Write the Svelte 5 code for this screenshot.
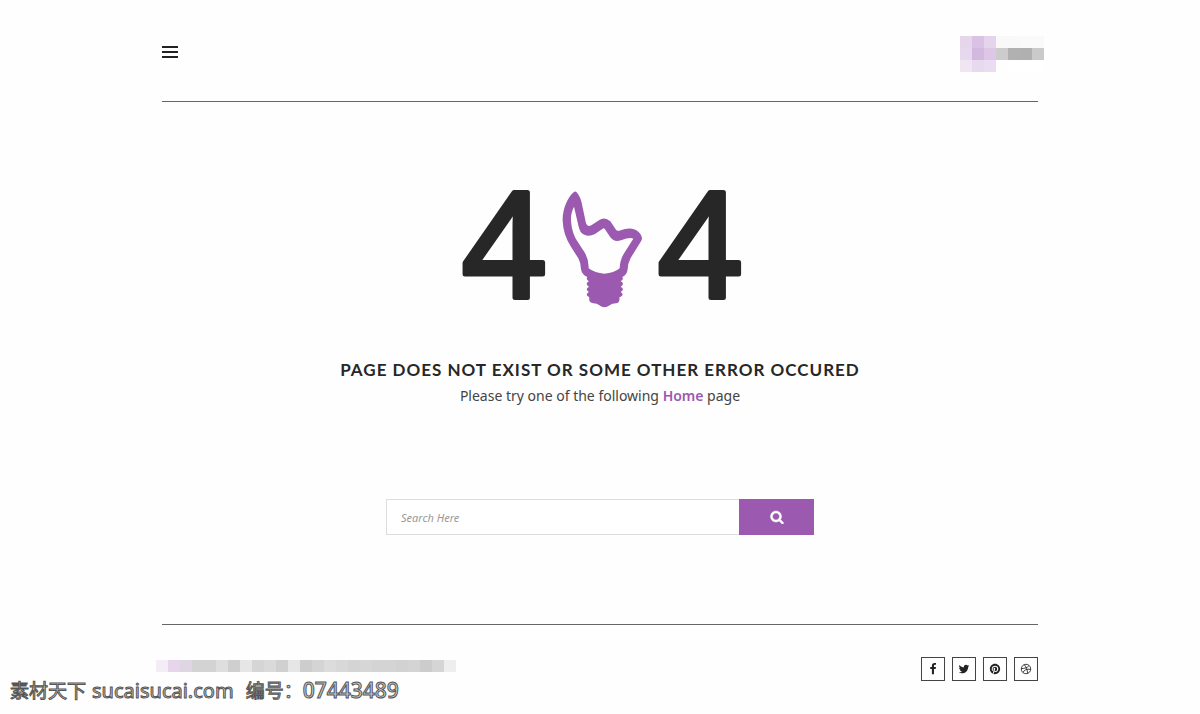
<script>
	let query = '';

	const logoRows = [
		['#e5d6ea', '#dac2e4', '#e5d5ec', '#f9f9f9', '#f9f9f9', '#fafafa', '#fafafa'],
		['#e6d8ed', '#d3b8e0', '#dec7e6', '#cccccc', '#b1b1b1', '#b0b0b0', '#cacaca'],
		['#efe5f3', '#e7daef', '#eaddf1', '#fefefe', '#ffffff', '#ffffff', '#ffffff']
	];

	const copyrightCells = [
		'#f4edf6', '#e6d5eb', '#dfd6e3', '#d3d3d3', '#d3d3d3', '#dedede', '#cfcfcf', '#e6e6e6', '#d5d5d5',
		'#dadada', '#d0d0d0', '#e6e6e6', '#cdcdcd', '#d4d4d4', '#dcdcdc', '#d8d8d8', '#d4d4d4', '#d6d6d6',
		'#d4d4d4', '#d4d4d4', '#d2d2d2', '#d4d4d4', '#cccccc', '#d5d5d5', '#eeeeee'
	];

	const socials = [
		{
			name: 'Facebook',
			box: '0 0 1792 1792',
			path: 'M1343 12v264h-157q-86 0-116 36t-30 108v189h293l-39 296h-254v759h-306v-759h-255v-296h255v-218q0-186 104-288.5t277-102.5q147 0 228 12z'
		},
		{
			name: 'Twitter',
			box: '0 0 1792 1792',
			path: 'M1684 408q-67 98-162 167 1 14 1 42 0 130-38 259.5t-115.5 248.5-184.5 210.5-258 146-323 54.5q-271 0-496-145 35 4 78 4 225 0 401-138-105-2-188-64.5t-114-159.5q33 5 61 5 43 0 85-11-112-23-185.5-111.5t-73.5-205.5v-4q68 38 146 41-66-44-105-115t-39-154q0-88 44-163 121 149 294.5 238.5t371.5 99.5q-8-38-8-74 0-134 94.5-228.5t228.5-94.5q140 0 236 102 109-21 205-78-37 115-142 178 93-10 186-50z'
		},
		{
			name: 'Pinterest',
			box: '-2 -2 28 28',
			path: 'M12 0C5.373 0 0 5.372 0 12c0 5.084 3.163 9.426 7.627 11.174-.105-.949-.2-2.405.042-3.441.218-.937 1.407-5.965 1.407-5.965s-.359-.719-.359-1.782c0-1.668.967-2.914 2.171-2.914 1.023 0 1.518.769 1.518 1.69 0 1.029-.655 2.568-.994 3.995-.283 1.194.599 2.169 1.777 2.169 2.133 0 3.772-2.249 3.772-5.495 0-2.873-2.064-4.882-5.012-4.882-3.414 0-5.418 2.561-5.418 5.207 0 1.031.397 2.138.893 2.738a.36.36 0 01.083.345l-.333 1.36c-.053.22-.174.267-.402.161-1.499-.698-2.436-2.889-2.436-4.649 0-3.785 2.75-7.262 7.929-7.262 4.163 0 7.398 2.967 7.398 6.931 0 4.136-2.607 7.464-6.227 7.464-1.216 0-2.359-.631-2.75-1.378l-.748 2.853c-.271 1.043-1.002 2.35-1.492 3.146C9.57 23.812 10.763 24 12 24c6.627 0 12-5.373 12-12 0-6.628-5.373-12-12-12z'
		},
		{
			name: 'Dribbble',
			box: '-2 -2 28 28',
			line: true,
			path: 'M12 1a11 11 0 1 0 0 22a11 11 0 1 0 0-22M8 2c4 5 7 11 8 20M1 11c8 0 14-2 18-7M5 20c3-6 9-9 18-7'
		}
	];
</script>

<svelte:head>
	<title>404</title>
</svelte:head>

<div class="page">
	<header>
		<button class="menu" aria-label="Menu">
			<span></span>
			<span></span>
			<span></span>
		</button>
		<a class="logo" href="/" aria-label="Logo">
			{#each logoRows as row}
				{#each row as color}
					<span style="background: {color}"></span>
				{/each}
			{/each}
		</a>
	</header>

	<main>
		<svg class="error-code" viewBox="0 0 276 118" role="img" aria-label="404">
			<text x="0" y="108">4</text>
			<g transform="translate(88 -10) scale(0.3333)">
				<path fill-rule="evenodd" d="M72 36C53 51 37 87 38 122C39 150 47 175 62 199L85 235Q93 249 93 268Q96 285 112 291C109 296 110 300 117 304C108 308 108 315 117 320C108 325 108 331 117 336C108 341 108 347 118 352Q115 368 130 370Q142 370 148 376Q163 388 179 376Q186 370 198 370Q211 368 208 352C220 347 220 341 212 336C221 331 221 325 212 320C221 315 221 308 212 304C219 300 220 296 217 291Q231 285 233 268Q233 251 242 234L273 184Q281 171 268 158Q247 137 212 151Q204 155 198 149L181 124Q163 108 147 121L124 136Q112 142 108 130L94 64C91 54 86 44 80 37Q76 32 72 36ZM72 80C66 92 62 105 63 122C65 150 72 168 84 187L103 216Q117 238 116 265Q135 280 163 281Q192 280 209 265Q210 240 221 222L250 176Q240 171 213 181Q193 188 181 172L165 148Q162 143 158 146L135 162Q110 175 92 156Q88 148 86 140Z" />
			</g>
			<text x="196" y="108">4</text>
		</svg>
		<h1>PAGE DOES NOT EXIST OR SOME OTHER ERROR OCCURED</h1>
		<p>Please try one of the following <a href="/">Home</a> page</p>

		<form on:submit|preventDefault>
			<input type="search" bind:value={query} placeholder="Search Here" aria-label="Search" />
			<button aria-label="Search">
				<svg viewBox="0 0 1792 1792">
					<path d="M1216 832q0-185-131.5-316.5t-316.5-131.5-316.5 131.5-131.5 316.5 131.5 316.5 316.5 131.5 316.5-131.5 131.5-316.5zm512 832q0 52-38 90t-90 38q-54 0-90-38l-343-342q-179 124-399 124-143 0-273.5-55.5t-225-150-150-225-55.5-273.5 55.5-273.5 150-225 225-150 273.5-55.5 273.5 55.5 225 150 150 225 55.5 273.5q0 220-124 399l343 343q37 37 37 90z" />
				</svg>
			</button>
		</form>
	</main>

	<footer>
		<div class="copyright">
			{#each copyrightCells as color}
				<span style="background: {color}"></span>
			{/each}
		</div>
		<nav>
			{#each socials as social}
				<a href="/" aria-label={social.name}>
					<svg class:line={social.line} viewBox={social.box}>
						<path d={social.path} />
					</svg>
				</a>
			{/each}
		</nav>
	</footer>
</div>

<div class="watermark">
	<span>素材天下</span>
	<span class="site">sucaisucai.com</span>
	<span class="number">编号：<b>07443489</b></span>
</div>

<style>
	:global(body) {
		background: #fefefe;
		color: #272727;
		font-family: "Noto Sans", "Noto Sans CJK SC", sans-serif;
	}

	.page {
		width: 73%;
		margin: 0 auto;
	}

	header {
		display: flex;
		justify-content: space-between;
		align-items: flex-start;
		padding: 36px 0 29px;
		border-bottom: 1px solid #666;
	}

	.menu {
		display: grid;
		gap: 3px;
		width: 16px;
		margin-top: 10px;
		padding: 0;
		border: none;
		background: none;
		cursor: pointer;
	}

	.menu span {
		height: 2px;
		background: #222;
	}

	.logo {
		display: grid;
		grid-template-columns: repeat(7, 12px);
		grid-auto-rows: 12px;
		margin-right: -6px;
	}

	main {
		display: flex;
		flex-direction: column;
		align-items: center;
		padding: 88px 0 89px;
		text-align: center;
	}

	.error-code {
		width: 276px;
		height: 118px;
		overflow: visible;
		fill: #9b59b0;
	}

	.error-code text {
		font: 146px "Noto Sans", sans-serif;
		fill: #272727;
		stroke: #272727;
		stroke-width: 5px;
		stroke-linejoin: round;
	}

	h1 {
		margin: 50px 0 0;
		font: bold 17px/24px Lato, sans-serif;
		letter-spacing: 1px;
	}

	p {
		margin: 2px 0 0;
		font-size: 14px;
		line-height: 24px;
		color: #444;
	}

	p a {
		color: #9b59b0;
		font-weight: 600;
		text-decoration: none;
	}

	form {
		display: flex;
		width: 428px;
		max-width: 100%;
		height: 36px;
		margin-top: 91px;
	}

	input {
		flex: 1;
		min-width: 0;
		padding: 0 14px;
		border: 1px solid #ddd;
		border-right: none;
		background: #fff;
		font: italic 11px "Noto Sans", sans-serif;
	}

	input::placeholder {
		color: #999;
	}

	form button {
		display: flex;
		justify-content: center;
		align-items: center;
		width: 75px;
		border: none;
		background: #9b59b0;
		cursor: pointer;
	}

	form button svg {
		width: 14px;
		height: 14px;
		fill: #fff;
		stroke: #fff;
		stroke-width: 60px;
	}

	footer {
		display: flex;
		justify-content: space-between;
		align-items: flex-start;
		padding-top: 32px;
		border-top: 1px solid #666;
	}

	.copyright {
		display: grid;
		grid-template-columns: repeat(25, 12px);
		grid-auto-rows: 12px;
		margin: 3px 0 0 -6px;
	}

	nav {
		display: flex;
		gap: 7px;
	}

	nav a {
		display: flex;
		justify-content: center;
		align-items: center;
		width: 22px;
		height: 22px;
		border: 1px solid #444;
	}

	nav svg {
		width: 12px;
		height: 12px;
		fill: #222;
	}

	nav .line {
		fill: none;
		stroke: #222;
		stroke-width: 2px;
	}

	.watermark {
		position: absolute;
		top: 676px;
		left: 10px;
		display: flex;
		align-items: baseline;
		gap: 6px;
		font-size: 19px;
		line-height: 28px;
		color: #ccc;
		white-space: nowrap;
		-webkit-text-stroke: 1px #555;
	}

	.site {
		font-size: 20px;
	}

	.number {
		margin-left: 6px;
	}

	.number b {
		font-size: 21px;
		font-weight: 500;
	}
</style>
